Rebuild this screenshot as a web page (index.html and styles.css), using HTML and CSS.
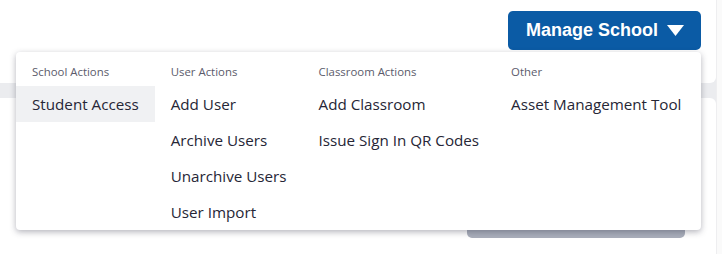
FILE: index.html
```html
<!DOCTYPE html>
<html lang="en">
<head>
    <meta charset="UTF-8">
    <meta name="viewport" content="width=device-width, initial-scale=1.0">
    <title>Manage School</title>
    <link rel="stylesheet" href="styles.css">
</head>
<body>
    <div id="page">
        <div id="main">
            <div class="card card-top">
                <div class="toolbar">
                    <button id="manage">
                        Manage School
                        <svg class="caret" width="17" height="11" viewBox="0 0 17 11"><path d="M0 0 H17 L8.5 11 Z" fill="#fff"/></svg>
                    </button>
                </div>
            </div>
            <div class="card card-bottom">
                <div class="bottom-row">
                    <div class="ghost-button"></div>
                </div>
            </div>
        </div>
        <div id="scroll-track"></div>

        <div id="menu">
            <div class="menu-col">
                <div class="menu-head">School Actions</div>
                <div class="menu-item active">Student Access</div>
            </div>
            <div class="menu-col">
                <div class="menu-head">User Actions</div>
                <div class="menu-item">Add User</div>
                <div class="menu-item">Archive Users</div>
                <div class="menu-item">Unarchive Users</div>
                <div class="menu-item">User Import</div>
            </div>
            <div class="menu-col">
                <div class="menu-head">Classroom Actions</div>
                <div class="menu-item">Add Classroom</div>
                <div class="menu-item">Issue Sign In QR Codes</div>
            </div>
            <div class="menu-col">
                <div class="menu-head">Other</div>
                <div class="menu-item">Asset Management Tool</div>
            </div>
        </div>
    </div>
</body>
</html>
```

FILE: styles.css
```css
body {
    margin: 0;
    font-family: 'Open Sans', 'Liberation Sans', sans-serif;
    background: #fff;
    height: 254px;
    overflow: hidden;
}

#page {
    position: relative;
    display: flex;
    height: 254px;
}

#main {
    width: 716px;
    display: flex;
    flex-direction: column;
    gap: 15px;
    background: #ebecef;
}

.card {
    background: #fff;
}

.card-top {
    height: 83px;
    border-radius: 0 0 6px 0;
}

.card-bottom {
    flex: 1;
    border-radius: 0 6px 0 0;
}

#scroll-track {
    flex: 1;
    border-left: 1px solid #eeeef0;
    background: #fafafa;
}

.toolbar {
    display: flex;
    justify-content: flex-end;
    padding: 11px 15px 0 0;
}

#manage {
    display: flex;
    align-items: center;
    height: 39px;
    padding: 0 17px 0 18px;
    border: none;
    border-radius: 5px;
    background: #0b5ba5;
    color: #fff;
    font-family: 'Liberation Sans', Arial, sans-serif;
    font-weight: bold;
    font-size: 18px;
    cursor: pointer;
}

.caret {
    margin-left: 9px;
}

.bottom-row {
    display: flex;
    justify-content: flex-end;
    padding: 102px 31px 0 0;
}

.ghost-button {
    width: 218px;
    height: 38px;
    border-radius: 0 0 5px 5px;
    background: #a9aebb;
}

/* dropdown */
#menu {
    position: absolute;
    top: 52px;
    left: 16px;
    width: 685px;
    display: flex;
    background: #fff;
    border-radius: 4px;
    box-shadow: 0 2px 6px rgba(40, 40, 60, 0.35);
    padding-top: 12px;
}

.menu-head {
    padding: 0 16px;
    height: 16px;
    line-height: 16px;
    margin-bottom: 6px;
    font-size: 11.4px;
    color: #5b5b6b;
}

.menu-item {
    padding: 0 16px;
    line-height: 36px;
    font-size: 15.2px;
    color: #262636;
    white-space: nowrap;
}

.menu-item.active {
    background: #f0f1f3;
}
```
